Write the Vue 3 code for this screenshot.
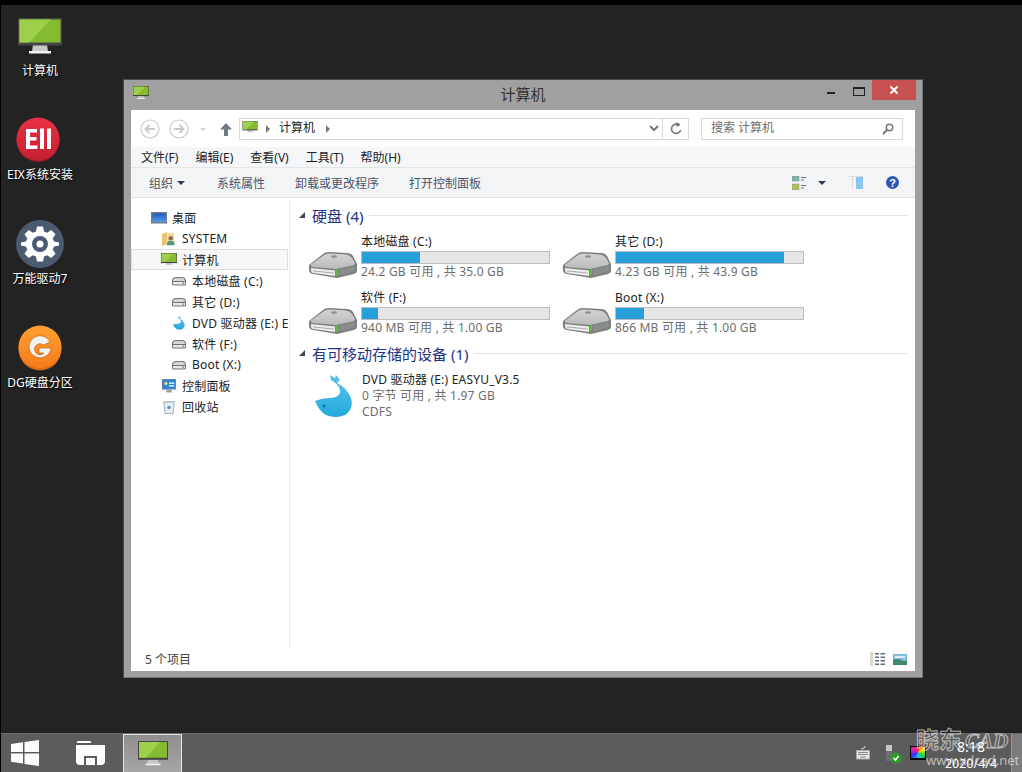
<script setup>
const desktopIcons = [
  { label: '计算机', icon: 'monitor' },
  { label: 'EIX系统安装', icon: 'eix' },
  { label: '万能驱动7', icon: 'gear' },
  { label: 'DG硬盘分区', icon: 'dg' },
]
const menus = ['文件(F)', '编辑(E)', '查看(V)', '工具(T)', '帮助(H)']
const actions = ['系统属性', '卸载或更改程序', '打开控制面板']
const tree = [
  { name: '桌面', icon: 'desk', level: 0 },
  { name: 'SYSTEM', icon: 'user', level: 1 },
  { name: '计算机', icon: 'monitor', level: 1, active: true },
  { name: '本地磁盘 (C:)', icon: 'mini', level: 2 },
  { name: '其它 (D:)', icon: 'mini', level: 2 },
  { name: 'DVD 驱动器 (E:) EASYU_V3.5', icon: 'whale', level: 2 },
  { name: '软件 (F:)', icon: 'mini', level: 2 },
  { name: 'Boot (X:)', icon: 'mini', level: 2 },
  { name: '控制面板', icon: 'panel', level: 1 },
  { name: '回收站', icon: 'bin', level: 1 },
]
const disks = [
  { name: '本地磁盘 (C:)', used: 31, info: '24.2 GB 可用 , 共 35.0 GB' },
  { name: '其它 (D:)', used: 90, info: '4.23 GB 可用 , 共 43.9 GB' },
  { name: '软件 (F:)', used: 8.5, info: '940 MB 可用 , 共 1.00 GB' },
  { name: 'Boot (X:)', used: 15, info: '866 MB 可用 , 共 1.00 GB' },
]
</script>

<template>
  <div class="desktop">
    <svg class="defs" width="0" height="0">
      <defs>
        <linearGradient id="blueFade" x1="0" y1="0" x2="0" y2="1">
          <stop offset="0" stop-color="#5cc6ea" />
          <stop offset="1" stop-color="#22a9dd" />
        </linearGradient>
        <linearGradient id="hddTop" x1="0" y1="0" x2="0" y2="1">
          <stop offset="0" stop-color="#d2d4d2" />
          <stop offset="1" stop-color="#b9bcba" />
        </linearGradient>
        <linearGradient id="deskBlue" x1="0" y1="0" x2="0" y2="1">
          <stop offset="0" stop-color="#1c58b8" />
          <stop offset="1" stop-color="#5c9ae6" />
        </linearGradient>
        <linearGradient id="orange" x1="0" y1="0" x2="0" y2="1">
          <stop offset="0" stop-color="#ffa030" />
          <stop offset="1" stop-color="#f47d1c" />
        </linearGradient>
        <linearGradient id="red" x1="0" y1="0" x2="0" y2="1">
          <stop offset="0" stop-color="#ea3144" />
          <stop offset="1" stop-color="#c3202f" />
        </linearGradient>
      </defs>
      <symbol id="monitor" viewBox="0 0 44 38">
        <path d="M15 27h14l1 6H14z" fill="#c9c9c9" />
        <path d="M11 33h22v2.500H11z" fill="#f4f4f4" />
        <rect width="44" height="27.500" fill="#454545" />
        <rect x="1.500" y="1.500" width="41" height="23" fill="#84bb30" />
        <path d="M1.500 1.500h31l-21 23h-10z" fill="#9ed04c" />
      </symbol>
      <symbol id="hdd" viewBox="0 0 48 26">
        <path d="M0 13 14 2q2-2 6-2l18 1q4 0 6 3l4 8v7q0 2-3 3l-17 4-24-4q-4-1-4-4z" fill="#7c7f7f" />
        <path d="M1.500 13 15 3q2-1.500 5-1.500l17 1q4 .500 6 3.500l3 5q0 2-3 2.500L27 17 4 15q-2.500-.500-2.500-2z" fill="url(#hddTop)" />
        <path d="M2 16l24 2.500V24L4 21q-2-.500-2-3z" fill="#ececec" />
        <path d="M4 18.500l21 2.200v.8L4 19.300z" fill="#9a9c9c" />
        <path d="M26.500 18l2.500-.5v6l-2.500.5z" fill="#5ac030" />
        <path d="M30 17.500 46 14v5l-16 4.500z" fill="#8a8d8d" />
        <ellipse cx="25" cy="4.500" rx="3" ry="1.200" fill="#8a8c8c" />
      </symbol>
      <symbol id="mini" viewBox="0 0 16 10">
        <path d="M1 4q1-3 4-3h6q3 0 4 3v4q0 1.500-1.500 1.500h-11Q1 9.500 1 8z" fill="#6f7375" />
        <path d="M2 4q1-2 3-2h6q2 0 3 2v1H2z" fill="#d4d6d6" />
        <path d="M2 6h12v2.500H2z" fill="#e6e7e7" />
        <path d="M11.500 6.500h1.500v1.500h-1.500z" fill="#55b52f" />
      </symbol>
      <symbol id="whale" viewBox="0 0 40 44">
        <path d="M16 1l5 3 1-3 4 5-3 3q10 5 14 15 3 11-6 17-9 4-19 0-7-4-11-14 7-3 14-3 9 0 11-5 1-6-6-11l-3-2z" fill="url(#blueFade)" />
        <circle cx="10" cy="32" r="1.500" fill="#0f6f9e" />
      </symbol>
      <symbol id="desk" viewBox="0 0 16 13">
        <rect width="16" height="11.500" y=".500" fill="#6b7b92" />
        <rect x="1.500" y="2" width="13" height="8.500" fill="url(#deskBlue)" />
      </symbol>
      <symbol id="user" viewBox="0 0 16 16">
        <path d="M0 2l6-2v14l-6 2z" fill="#eac36f" />
        <path d="M6 1h8v12H6z" fill="#f4dc9c" />
        <circle cx="10" cy="7" r="2.500" fill="#8a6a54" />
        <path d="M5.500 15q0-5 4.500-5t4.500 5z" fill="#4f9a7c" />
      </symbol>
      <symbol id="panel" viewBox="0 0 16 16">
        <rect x=".500" y=".500" width="15" height="11" fill="#2f87d8" stroke="#5a7fa5" />
        <circle cx="4.500" cy="5" r="1.800" fill="#ffd765" />
        <path d="M8 4h6v1.500H8zM8 7h6v1.500H8z" fill="#fff" />
        <rect x="5" y="12" width="6" height="3.500" rx="1" fill="#9aa0a6" />
      </symbol>
      <symbol id="bin" viewBox="0 0 14 16">
        <path d="M1 2h12l-1.500 13.500h-9z" fill="#e6edf3" stroke="#98a4ae" />
        <path d="M0 1.500h14V3H0z" fill="#b8c2cb" />
        <circle cx="7" cy="8.500" r="2" fill="#4a8fd0" />
      </symbol>
    </svg>

    <div class="top-band"></div>
    <main class="screen">
      <div v-for="item in desktopIcons" :key="item.label" class="desk-item">
        <div class="desk-graphic" :class="`g-${item.icon}`">
          <svg v-if="item.icon === 'monitor'" width="44" height="38"><use href="#monitor" /></svg>
          <svg v-else-if="item.icon === 'eix'" width="44" height="46" viewBox="0 0 44 46">
            <circle cx="22" cy="23.500" r="21.500" fill="#9c1a26" />
            <circle cx="22" cy="22" r="21.500" fill="url(#red)" />
            <path d="M10 12h11v3.500h-7v4.500h6.500v3.500H14v5h7.500V32H10zM24 11.500h4V32h-4zM31 11.500h4V32h-4z" fill="#fff" />
          </svg>
          <svg v-else-if="item.icon === 'gear'" width="48" height="48" viewBox="0 0 48 48">
            <circle cx="24" cy="24" r="24" fill="#4b5b72" />
            <path d="M21 8h6l1 5 3 1.300 4.300-2.800 4.200 4.200-2.800 4.300L38 23l5 1v3l-5 1-1.300 3 2.800 4.300-4.200 4.200-4.300-2.800-3 1.300-1 5h-6l-1-5-3-1.300-4.300 2.800-4.200-4.200 2.800-4.300L10 28l-5-1v-3l5-1 1.300-3-2.800-4.300 4.200-4.200 4.300 2.800 3-1.300z" fill="#fff" transform="translate(0 -1.500)" />
            <circle cx="24" cy="24" r="8" fill="#4b5b72" />
            <circle cx="24" cy="24" r="3.500" fill="#fff" />
          </svg>
          <svg v-else width="44" height="46" viewBox="0 0 44 46">
            <circle cx="22" cy="24" r="21.500" fill="#d9661a" />
            <circle cx="22" cy="22" r="21.500" fill="url(#orange)" />
            <path d="M32 17a11 11 0 1 0 1 6H21v5h5a5.500 5.500 0 1 1-.500-8z" fill="#f2f2f2" stroke="#c4621a" stroke-width=".700" />
          </svg>
        </div>
        <span class="desk-label">{{ item.label }}</span>
      </div>

      <section class="window">
        <header class="title-bar">
          <svg class="title-icon" width="16" height="14"><use href="#monitor" /></svg>
          <span class="title-text">计算机</span>
          <div class="controls">
            <i class="ctl-min"></i>
            <i class="ctl-max"></i>
            <div class="ctl-close">
              <svg width="10" height="10" viewBox="0 0 10 10"><path d="M1.500 1.500l7 7M8.500 1.500l-7 7" stroke="#fff" stroke-width="2" /></svg>
            </div>
          </div>
        </header>

        <div class="client">
          <div class="nav-row">
            <svg width="100" height="22" viewBox="0 0 100 22" class="nav-buttons">
              <g fill="none" stroke="#c9c9c9" stroke-width="1.200">
                <circle cx="10" cy="11" r="9" />
                <circle cx="39" cy="11" r="9" />
                <path d="M15 11H6M9.500 7l-4 4 4 4M34 11h9M39.500 7l4 4-4 4" stroke-width="1.800" />
              </g>
              <path d="M60 10h6l-3 3z" fill="#d0d0d0" />
              <path d="M86 5l6 6.500h-4v6.500h-4v-6.500h-4z" fill="#6d7a86" />
            </svg>
            <div class="address">
              <svg width="16" height="13"><use href="#monitor" /></svg>
              <span class="crumb-arrow"></span>
              <span class="crumb">计算机</span>
              <span class="crumb-arrow"></span>
              <svg class="chevron" width="10" height="7" viewBox="0 0 10 7"><path d="M1 1l4 4 4-4" fill="none" stroke="#777" stroke-width="2" /></svg>
              <div class="refresh">
                <svg width="12" height="13" viewBox="0 0 12 13"><path d="M9.500 3.500A4.700 4.700 0 1 0 10.700 8" fill="none" stroke="#777" stroke-width="1.600" /><path d="M6.500 0v5l4-2.500z" fill="#777" /></svg>
              </div>
            </div>
            <div class="search">
              <span>搜索 计算机</span>
              <svg width="12" height="12" viewBox="0 0 12 12"><circle cx="7.500" cy="4.500" r="3.200" fill="none" stroke="#777" stroke-width="1.500" /><path d="M5 7l-4 4" stroke="#777" stroke-width="2" /></svg>
            </div>
          </div>

          <nav class="menu-row">
            <span v-for="m in menus" :key="m">{{ m }}</span>
          </nav>

          <div class="tool-row">
            <span class="organize">组织 <i class="drop"></i></span>
            <span v-for="a in actions" :key="a" class="action">{{ a }}</span>
            <div class="tool-right">
              <svg width="15" height="14" viewBox="0 0 15 14">
                <rect y="0" width="7" height="5" fill="#7fb4a0" stroke="#6c8fa8" stroke-width=".500" />
                <rect y="8" width="7" height="6" fill="#a9c060" stroke="#a08f70" stroke-width=".500" />
                <path d="M9 1h5v1H9zM9 3.500h3v1H9zM9 9h5v1H9zM9 11.500h3v1H9z" fill="#6a7480" />
              </svg>
              <i class="drop dark"></i>
              <svg class="pane" width="14" height="13" viewBox="0 0 14 13">
                <rect width="14" height="13" fill="#f4f4f4" />
                <rect x="7" width="7" height="13" fill="#8cc6f0" />
                <path d="M0 0h14v1H0zM3 0h1v13H3z" fill="#dcdcdc" />
              </svg>
              <svg class="help" width="13" height="13" viewBox="0 0 13 13">
                <circle cx="6.500" cy="6.500" r="6.500" fill="#2f55b4" />
                <text x="6.500" y="10.500" font-size="11" font-weight="700" text-anchor="middle" fill="#fff" font-family="Liberation Sans">?</text>
              </svg>
            </div>
          </div>

          <div class="main">
            <aside class="tree">
              <div v-for="n in tree" :key="n.name" class="tree-row" :class="[`level-${n.level}`, { active: n.active }]">
                <svg class="tree-icon" width="16" height="14"><use :href="`#${n.icon}`" /></svg>
                <span class="tree-name">{{ n.name }}</span>
              </div>
            </aside>
            <div class="content">
              <div class="group-head">
                <i class="tri"></i><span>硬盘 (4)</span><em></em>
              </div>
              <div class="tiles">
                <div v-for="d in disks" :key="d.name" class="tile">
                  <svg class="hdd-icon" width="48" height="26"><use href="#hdd" /></svg>
                  <div class="tile-body">
                    <div class="tile-name">{{ d.name }}</div>
                    <div class="bar"><div class="bar-fill" :style="{ width: d.used + '%' }"></div></div>
                    <div class="tile-info">{{ d.info }}</div>
                  </div>
                </div>
              </div>
              <div class="group-head second">
                <i class="tri"></i><span>有可移动存储的设备 (1)</span><em></em>
              </div>
              <div class="dvd">
                <svg class="dvd-icon" width="40" height="44"><use href="#whale" /></svg>
                <div class="dvd-body">
                  <div class="tile-name">DVD 驱动器 (E:) EASYU_V3.5</div>
                  <div class="tile-info">0 字节 可用 , 共 1.97 GB</div>
                  <div class="tile-info">CDFS</div>
                </div>
              </div>
            </div>
          </div>

          <footer class="status">
            <span>5 个项目</span>
            <div class="status-icons">
              <svg width="15" height="14" viewBox="0 0 15 14">
                <path d="M0 0h3v14H0z" fill="#d8dcc8" />
                <path d="M5 1h4v1.500H5zM10.500 1H15v1.500h-4.500zM5 4.500h4V6H5zM10.500 4.500H15V6h-4.500zM5 8h4v1.500H5zM10.500 8H15v1.500h-4.500zM5 11.500h4V13H5zM10.500 11.500H15V13h-4.500z" fill="#5b6b80" />
              </svg>
              <svg width="14" height="11" viewBox="0 0 14 11">
                <rect width="14" height="11" fill="#7fc0e0" />
                <path d="M0 6q4-2 8 0t6 0v5H0z" fill="#3f8a6a" />
                <rect x="2" y="2" width="10" height="2" fill="#d9eef7" />
              </svg>
            </div>
          </footer>
        </div>
      </section>
    </main>

    <footer class="taskbar">
      <div class="start">
        <svg width="28" height="26" viewBox="0 0 28 26"><path d="M0 4l12-1.700V12H0zM13.500 2L28 0v12H13.500zM0 13.500h12v10L0 21.800zM13.500 13.500H28V26l-14.500-2z" fill="#fff" /></svg>
      </div>
      <div class="task files">
        <svg width="29" height="26" viewBox="0 0 29 26">
          <path d="M1 2q0-1 1-1h12q1 0 1 1v1H1z" fill="#fff" />
          <path d="M0 5h29v16q0 4-4 4H4q-4 0-4-4z" fill="#fff" />
          <path d="M8 16h13v9H8z" fill="#5e5e5e" />
          <path d="M10 18h9v7h-9z" fill="#fff" />
        </svg>
      </div>
      <div class="task current">
        <svg width="30" height="26"><use href="#monitor" /></svg>
      </div>
      <div class="tray">
        <svg width="14" height="14" viewBox="0 0 14 14">
          <path d="M9 0q0 3-4 3" fill="none" stroke="#ddd" />
          <rect x=".500" y="4.500" width="13" height="8.500" fill="#e8e8e8" stroke="#aaa" />
          <path d="M2 6h10v1H2zM2 8h10v1H2zM4 10.500h6v1H4z" fill="#888" />
        </svg>
        <svg width="16" height="19" viewBox="0 0 16 19" class="usb">
          <rect x="0" y="0" width="6" height="6" fill="#c8c8c8" />
          <rect x="0" y="6" width="6" height="10" fill="#6d6d6d" />
          <circle cx="10" cy="13" r="5.500" fill="#2c9a2c" />
          <path d="M7.500 13l2 2 3-4" fill="none" stroke="#fff" stroke-width="1.500" />
        </svg>
        <div class="color-mon">
          <div class="rainbow"></div>
        </div>
        <div class="clock">
          <span>8:18</span>
          <span>2020/4/4</span>
        </div>
      </div>
      <div class="show-desk"></div>
      <div class="watermark">
        <span class="wm-big">晓东<i>CAD</i></span>
        <span class="wm-url">www.xdcad.net</span>
      </div>
    </footer>
  </div>
</template>

<style>
html, body { margin: 0; background: #232323; overflow: hidden; }
</style>

<style scoped>
.desktop {
  width: 1022px;
  height: 772px;
  display: flex;
  flex-direction: column;
  position: relative;
  background: #232323;
  font-family: "Noto Sans", "Noto Sans CJK SC", sans-serif;
  font-size: 12px;
  color: #222;
  overflow: hidden;
  border-left: 1px solid #000;
  box-sizing: border-box;
}
.defs { position: absolute; }
.top-band { height: 5px; background: #000; flex: none; }
.screen {
  flex: 1;
  display: flex;
  flex-direction: column;
  position: relative;
  min-height: 0;
}
.desk-item {
  width: 78px;
  height: 104px;
  display: flex;
  flex-direction: column;
  align-items: center;
  flex: none;
}
.desk-graphic {
  height: 58px;
  box-sizing: border-box;
  display: flex;
  align-items: flex-end;
  justify-content: center;
  flex: none;
}
.g-monitor { padding-bottom: 7px; }
.g-eix { padding-bottom: 4px; margin-left: -4px; }
.g-gear { padding-bottom: 3px; }
.g-dg { padding-bottom: 4px; margin-left: -1px; }
.desk-label {
  color: #fff;
  white-space: nowrap;
  line-height: 16px;
  text-shadow: 1px 1px 2px #000;
}

.window {
  position: absolute;
  left: 122px;
  top: 74px;
  width: 800px;
  height: 599px;
  box-sizing: border-box;
  background: #a0a0a0;
  border: 1px solid #4a4a4a;
  border-bottom-color: #777;
  border-right-color: #777;
  display: flex;
  flex-direction: column;
  padding: 0 7px 6px 7px;
}
.title-bar {
  height: 30px;
  flex: none;
  display: flex;
  align-items: center;
  position: relative;
}
.title-icon { margin: -4px 0 0 2px; }
.title-text {
  position: absolute;
  left: 0;
  right: 0;
  top: 4px;
  text-align: center;
  font-size: 15px;
  line-height: 20px;
  color: #333;
}
.controls {
  margin-left: auto;
  margin-right: -1px;
  align-self: flex-start;
  display: flex;
  align-items: flex-start;
}
.ctl-min { width: 8px; height: 2px; background: #222; margin: 12px 18px 0 0; }
.ctl-max { width: 10px; height: 6px; border: 1px solid #222; border-top-width: 2px; margin: 7px 7px 0 0; }
.ctl-close {
  width: 44px;
  height: 20px;
  background: #c75050;
  display: flex;
  align-items: center;
  justify-content: center;
}
.client {
  flex: 1;
  background: #fff;
  display: flex;
  flex-direction: column;
  min-height: 0;
}
.nav-row {
  height: 37px;
  flex: none;
  display: flex;
  align-items: center;
  padding-left: 9px;
  box-sizing: border-box;
}
.nav-buttons { margin-right: -1px; }
.address {
  width: 450px;
  height: 22px;
  box-sizing: border-box;
  border: 1px solid #d9d9d9;
  display: flex;
  align-items: center;
  padding-left: 2px;
}
.address > svg:first-child { margin-top: -2px; }
.crumb-arrow {
  width: 0;
  height: 0;
  border-left: 4px solid #777;
  border-top: 4px solid transparent;
  border-bottom: 4px solid transparent;
  margin: 0 9px 0 8px;
}
.crumb { margin-right: 3px; margin-top: -3px; }
.chevron { margin-left: auto; margin-right: 3px; }
.refresh {
  width: 25px;
  height: 100%;
  border-left: 1px solid #d9d9d9;
  display: flex;
  align-items: center;
  justify-content: center;
}
.search {
  margin-left: 12px;
  width: 202px;
  height: 22px;
  box-sizing: border-box;
  border: 1px solid #d9d9d9;
  display: flex;
  align-items: center;
  justify-content: space-between;
  padding: 0 8px 0 9px;
  color: #6d6d6d;
}
.search span { margin-top: -3px; }
.menu-row {
  height: 21px;
  flex: none;
  background: #f5f6f7;
  border-bottom: 1px solid #e3e4e6;
  box-sizing: border-box;
  display: flex;
  align-items: center;
  gap: 17px;
  padding-left: 10px;
  color: #1e1e1e;
}
.tool-row {
  height: 30px;
  flex: none;
  background: #f3f4f6;
  border-bottom: 1px solid #e2e3e5;
  box-sizing: border-box;
  display: flex;
  align-items: center;
  padding: 0 16px 0 18px;
  color: #4a5568;
}
.organize { width: 68px; display: flex; align-items: center; gap: 4px; }
.action:nth-of-type(2) { width: 78px; }
.action:nth-of-type(3) { width: 114px; }
.drop {
  width: 0;
  height: 0;
  border-top: 4px solid #2a3a58;
  border-left: 4px solid transparent;
  border-right: 4px solid transparent;
  display: inline-block;
}
.tool-right { margin-left: auto; display: flex; align-items: center; }
.tool-right .dark { margin: 0 0 0 11px; }
.pane { margin-left: 23px; }
.help { margin-left: 23px; }
.main { flex: 1; display: flex; min-height: 0; }
.tree {
  width: 159px;
  flex: none;
  box-sizing: border-box;
  border-right: 1px solid #eee;
  padding-top: 9px;
  overflow: hidden;
  letter-spacing: .2px;
}
.tree-row {
  height: 21px;
  display: flex;
  align-items: center;
  white-space: nowrap;
  box-sizing: border-box;
  border: 1px solid transparent;
  overflow: hidden;
}
.tree-row.active { background: #f7f7f7; border-color: #dedede; margin-right: 1px; }
.tree-icon { flex: none; margin-right: 5px; }
.level-0 { padding-left: 19px; }
.level-1 { padding-left: 29px; }
.level-2 { padding-left: 39px; }
.content { flex: 1; padding: 7px 7px 0 9px; min-width: 0; letter-spacing: .2px; }
.group-head {
  height: 20px;
  display: flex;
  align-items: center;
  color: #1e3287;
  font-size: 15px;
  letter-spacing: 0;
}
.group-head em { flex: 1; height: 1px; background: #e2e2e2; margin-left: 6px; }
.second { margin-top: -3px; }
.tri {
  width: 0;
  height: 0;
  border-bottom: 6px solid #444;
  border-left: 6px solid transparent;
  margin-right: 7px;
}
.tiles {
  display: grid;
  grid-template-columns: 254px 254px;
  grid-auto-rows: 56px;
  padding-left: 10px;
  margin-top: 9px;
}
.tile { display: flex; align-items: flex-start; }
.hdd-icon { margin: 18px 4px 0 0; flex: none; }
.tile-name { line-height: 16px; color: #222; white-space: nowrap; }
.bar {
  width: 189px;
  height: 13px;
  box-sizing: border-box;
  background: #e6e6e6;
  border: 1px solid #bcbcbc;
  margin-top: 1px;
}
.bar-fill { height: 100%; background: #26a0da; }
.tile-info { line-height: 16px; color: #6d6d6d; white-space: nowrap; }
.dvd { display: flex; padding-left: 15px; margin-top: 9px; }
.dvd-icon { margin-top: 2px; flex: none; }
.dvd-body { margin-left: 8px; }
.status {
  height: 23px;
  flex: none;
  display: flex;
  align-items: center;
  justify-content: space-between;
  padding: 0 8px 1px 14px;
  box-sizing: border-box;
  color: #444;
}
.status-icons { display: flex; align-items: center; gap: 8px; }
.taskbar {
  height: 39px;
  flex: none;
  background: #5c5c5c;
  border-top: 1px solid #6a6a6a;
  box-sizing: border-box;
  display: flex;
  position: relative;
  color: #fff;
}
.start { width: 63px; display: flex; align-items: center; padding-left: 10px; box-sizing: border-box; }
.task { width: 59px; display: flex; align-items: center; justify-content: center; }
.task.files { padding-right: 6px; box-sizing: border-box; }
.task.current {
  background: linear-gradient(#8f8f8f, #a5a5a5);
  border: 1px solid #e4e4e4;
  border-bottom: none;
  box-sizing: border-box;
}
.tray { margin-left: auto; display: flex; align-items: center; }
.usb { margin-left: 16px; margin-top: 3px; }
.color-mon {
  width: 16px;
  height: 14px;
  margin-left: 8px;
  background: #000;
  padding: 1px 1px 2px;
  box-sizing: border-box;
}
.rainbow { width: 100%; height: 100%; background: conic-gradient(#ff2020, #ffe020, #20d040, #20c0ff, #3030ff, #e020c0, #ff2020); }
.clock {
  display: flex;
  flex-direction: column;
  align-items: center;
  width: 54px;
  margin: 4px 13px 0 18px;
  font-size: 12.500px;
  line-height: 17px;
}
.clock span:first-child { font-size: 14px; }
.show-desk { width: 11px; background: #7b7b7b; border-left: 1px solid #999; box-sizing: border-box; }
.watermark {
  position: absolute;
  left: 915px;
  top: -7px;
  display: flex;
  flex-direction: column;
  align-items: flex-start;
  pointer-events: none;
  color: rgba(255, 255, 255, .6);
}
.wm-big { font-size: 23px; line-height: 25px; font-weight: 700; white-space: nowrap; color: transparent; -webkit-text-stroke: 1px rgba(255, 255, 255, .6); }
.wm-big i { font-family: "Liberation Serif", serif; margin-left: 3px; font-size: 21px; }
.wm-url { font-size: 13px; line-height: 16px; margin-left: 10px; margin-top: -2px; white-space: nowrap; }
</style>
